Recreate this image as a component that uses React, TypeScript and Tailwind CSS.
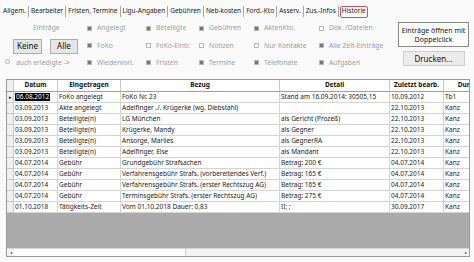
import React from "react"

const tabs = ["Allgem.", "Bearbeiter", "Fristen, Termine", "Ligu-Angaben", "Gebühren", "Neb-kosten", "Ford.-Kto", "Asserv.", "Zus.-Infos", "Historie"]

const filters: [string, boolean][][] = [
  [["Angelegt", true], ["Beteiligte", true], ["Gebühren", true], ["AktenKto.", true], ["Dok. /Dateien", false]],
  [["FoKo", true], ["FoKo-Eintr.", false], ["Notizen", false], ["Nur Kontakte", false], ["Alle Zeit-Einträge", true]],
  [["Wiedervorl.", true], ["Fristen", true], ["Termine", true], ["Telefonate", true], ["Aufgaben", true]],
]

const cols = [
  { title: "Datum", w: "w-[44px]" },
  { title: "Eingetragen", w: "w-[63px]" },
  { title: "Bezug", w: "w-[159px]" },
  { title: "Detail", w: "w-[110px]" },
  { title: "Zuletzt bearb.", w: "w-[54px]" },
  { title: "Durchgef.", w: "w-[60px]" },
]

const rows = [
  ["06.08.2012", "FoKo angelegt", "FoKo Nr. 23", "Stand am 16.09.2014: 30505,15", "10.09.2012", "Tb1"],
  ["03.09.2013", "Akte angelegt", "Adelfinger ./. Krügerke (wg. Diebstahl)", "", "22.10.2013", "Kanz"],
  ["03.09.2013", "Beteiligte(n)", "LG München", "als Gericht (Prozeß)", "22.10.2013", "Kanz"],
  ["03.09.2013", "Beteiligte(n)", "Krügerke, Mandy", "als Gegner", "22.10.2013", "Kanz"],
  ["03.09.2013", "Beteiligte(n)", "Ansorge, Marlies", "als GegnerRA", "22.10.2013", "Kanz"],
  ["03.09.2013", "Beteiligte(n)", "Adelfinger, Else", "als Mandant", "22.10.2013", "Kanz"],
  ["04.07.2014", "Gebühr", "Grundgebühr Strafsachen", "Betrag: 200 €", "04.07.2014", "Kanz"],
  ["04.07.2014", "Gebühr", "Verfahrensgebühr Strafs. (vorbereitendes Verf.)", "Betrag: 165 €", "04.07.2014", "Kanz"],
  ["04.07.2014", "Gebühr", "Verfahrensgebühr Strafs. (erster Rechtszug AG)", "Betrag: 165 €", "04.07.2014", "Kanz"],
  ["04.07.2014", "Gebühr", "Terminsgebühr Strafs. (erster Rechtszug AG)", "Betrag: 275 €", "04.07.2014", "Kanz"],
  ["01.10.2018", "Tätigkeits-Zeit", "Vom 01.10.2018 Dauer: 0,83", "II; ;", "30.09.2017", "Kanz"],
]

const colStarts = ["w-[59px]", "w-[53px]", "w-[55px]", "w-[65px]", "w-[70px]"]

const Check = ({ on }: { on: boolean }) => (
  <span className="w-[5px] h-[5px] border border-[#b8b8b8] bg-white flex items-center justify-center shrink-0">
    {on && <span className="w-[3px] h-[3px] bg-[#777]" />}
  </span>
)

export default function App() {
  return (
    <div className="w-[474px] h-[262px] bg-[#fafafa] overflow-hidden text-[#333] font-['Noto_Sans',sans-serif] text-[6.5px] leading-none">
      {/* tabs */}
      <div className="flex items-center h-[15px] mt-[4px] pl-[2px]">
        {tabs.map((t, i) => (
          <div key={t} className="flex items-center">
            {i > 0 && <span className="w-px h-[11px] bg-[#a8a8a8] mx-[1px]" />}
            <span
              className={
                t === "Historie"
                  ? "px-[1px] h-[12px] flex items-center border border-[#d05060] rounded-[2px] text-[#222]"
                  : "px-[1px] h-[12px] flex items-center text-[#222]"
              }
            >
              {t}
            </span>
          </div>
        ))}
      </div>

      {/* filters */}
      <div className="flex h-[59px] mt-[1px] text-[#9c9c9c] text-[6.8px]">
        <div className="w-[87px] shrink-0 flex flex-col">
          <div className="h-[17px] flex items-center pl-[33px]">Einträge</div>
          <div className="h-[18px] flex items-center gap-[8px] pl-[13px]">
            <button className="w-[29px] h-[15px] border border-[#adadad] bg-[#e6e6e6] text-[#111] text-[8px]">Keine</button>
            <button className="w-[28px] h-[15px] border border-[#adadad] bg-[#e6e6e6] text-[#111] text-[8px]">Alle</button>
          </div>
          <div className="h-[16px] flex items-center pl-[5px] gap-[6px]">
            <span className="w-[5px] h-[5px] rounded-full border border-[#b0b0b0] bg-white -mt-[4px]" />
            <span>auch erledigte -&gt;</span>
          </div>
        </div>
        <div className="flex flex-col shrink-0">
          {filters.map((row, ri) => (
            <div key={ri} className={ri === 1 ? "h-[18px] flex items-center" : ri === 0 ? "h-[17px] flex items-center" : "h-[16px] flex items-center"}>
              {row.map(([label, on], ci) => (
                <div key={label} className={`${colStarts[ci]} flex items-center gap-[5px] whitespace-nowrap`}>
                  <Check on={on} />
                  <span>{label}</span>
                </div>
              ))}
            </div>
          ))}
        </div>
        <div className="flex flex-col items-center ml-[9px] pt-[2px] w-[71px] shrink-0">
          <div className="w-[71px] h-[25px] border border-[#8a8a8a] bg-white text-[#111] text-[7px] flex items-center justify-center text-center leading-[9px]">
            Einträge öffnen mit<br />Doppelclick
          </div>
          <button className="mt-[4px] w-[62px] h-[15px] border border-[#d0d0d0] bg-[#ececec] text-[#111] text-[8px]">Drucken...</button>
        </div>
      </div>

      {/* table */}
      <div className="ml-[6px] w-[464px] h-[178px] border border-[#9a9a9a] bg-[#ababab] flex flex-col overflow-hidden">
        <div className="flex-1 overflow-hidden">
          <div className="flex h-[12px] bg-white border-b border-[#a0a0a0] font-bold text-[#111] w-max">
            <div className="w-[7px] border-r border-[#c8c8c8] bg-[#f0f0f0]" />
            {cols.map((c) => (
              <div key={c.title} className={`${c.w} border-r border-[#c8c8c8] flex items-center justify-center whitespace-nowrap overflow-hidden`}>
                {c.title}
              </div>
            ))}
          </div>
          {rows.map((r, ri) => (
            <div key={ri} className="flex h-[11px] bg-white w-max">
              <div className="w-[7px] border-r border-b border-[#c8c8c8] bg-[#f0f0f0] flex items-center justify-center text-[#000] text-[5px]">
                {ri === 0 ? "▸" : ""}
              </div>
              {r.map((cell, ci) => (
                <div key={ci} className={`${cols[ci].w} border-r border-b border-[#d4d4d4] flex items-center pl-[1px] whitespace-nowrap overflow-hidden text-[#222]`}>
                  {ri === 0 && ci === 0 ? <span className="bg-black text-white px-[1px] py-[1px]">{cell}</span> : cell}
                </div>
              ))}
            </div>
          ))}
        </div>
        <div className="h-[8px] bg-[#f4f4f4] border-t border-[#d8d8d8] flex items-center">
          <div className="w-[7px] h-[7px] flex items-center justify-center text-[4px] text-[#333]">◂</div>
          <div className="w-[172px] h-[7px] bg-white border-r border-[#d0d0d0]" />
          <div className="flex-1" />
          <div className="w-[6px] h-[7px] flex items-center justify-center text-[4px] text-[#333]">▸</div>
        </div>
      </div>
    </div>
  )
}
